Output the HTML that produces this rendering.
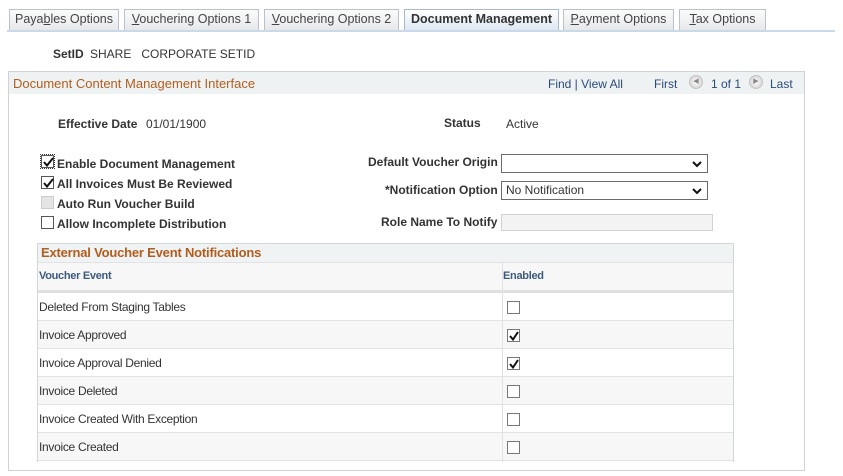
<!DOCTYPE html>
<html><head><meta charset="utf-8"><style>
*{margin:0;padding:0;box-sizing:border-box}
body{width:843px;height:476px;background:#fff;font-family:"Liberation Sans",Arial,sans-serif;position:relative;overflow:hidden;color:#333}
.a{position:absolute;white-space:nowrap}
.tab{position:absolute;top:9px;height:21px;border:1px solid #b9c2cb;border-bottom:none;background:linear-gradient(#fbfbfb,#e6e8ea);font-size:12.5px;color:#444;text-align:center;line-height:19px}
.tab.on{background:linear-gradient(#fff,#dde8f3);font-weight:bold;color:#333;border-color:#a9b9c9}
.b{font-weight:bold;font-size:12px;color:#333}
.t{font-size:12px;color:#333}
.cb{position:absolute;width:13px;height:13px;border:1px solid #555;background:#fff}
.cb svg{position:absolute;left:0;top:0}
.row{position:absolute;left:38px;width:695px;height:28px;border-bottom:1px solid #e2e2e2}
.row span{position:absolute;left:1px;top:7px;font-size:12px;color:#333;letter-spacing:-0.3px}
.row .cb{left:469px;top:8px;border-color:#777}
.g{background:#f7f7f7}
.sel{position:absolute;height:19px;border:1px solid #6b6b6b;background:#fff;font-size:12px;line-height:17px;padding-left:4px}
.sel svg{position:absolute;right:5px;top:5px}
</style></head><body>
<div class="a" style="left:7px;top:30px;width:828px;height:2px;background:#c9d9ea"></div>
<div class="tab" style="left:9px;width:110px">Paya<u>b</u>les Options</div>
<div class="tab" style="left:124px;width:135px"><u>V</u>ouchering Options 1</div>
<div class="tab" style="left:264px;width:135px"><u>V</u>ouchering Options 2</div>
<div class="tab on" style="left:404px;width:155px">Document Management</div>
<div class="tab" style="left:563px;width:111px"><u>P</u>ayment Options</div>
<div class="tab" style="left:679px;width:87px"><u>T</u>ax Options</div>

<div class="a b" style="left:53px;top:47px">SetID</div>
<div class="a t" style="left:90px;top:47px">SHARE &nbsp;&nbsp;CORPORATE SETID</div>

<div class="a" style="left:8px;top:71px;width:797px;height:400px;border:1px solid #cfd3d6"></div>
<div class="a" style="left:9px;top:72px;width:795px;height:22px;background:#eff2f3"></div>
<div class="a" style="left:13px;top:76px;font-size:13px;color:#b25d1e">Document Content Management Interface</div>
<div class="a" style="left:548px;top:77px;font-size:12px;color:#2a4a7a">Find | View All</div>
<div class="a" style="left:654px;top:77px;font-size:12px;color:#2a4a7a">First</div>
<div class="a" style="left:689px;top:75px;width:14px;height:14px;border-radius:50%;background:radial-gradient(#fff,#c9c9c9);border:1px solid #c4c4c4;font-size:7px;line-height:12px;text-align:center;color:#888">◀</div>
<div class="a" style="left:711px;top:77px;font-size:12px;color:#2a4a7a">1 of 1</div>
<div class="a" style="left:749px;top:75px;width:14px;height:14px;border-radius:50%;background:radial-gradient(#fff,#c9c9c9);border:1px solid #c4c4c4;font-size:7px;line-height:12px;text-align:center;color:#888">▶</div>
<div class="a" style="left:770px;top:77px;font-size:12px;color:#2a4a7a">Last</div>

<div class="a b" style="left:58px;top:117px">Effective Date</div>
<div class="a t" style="left:146px;top:117px">01/01/1900</div>
<div class="a b" style="left:444px;top:116px">Status</div>
<div class="a t" style="left:506px;top:117px">Active</div>

<div class="cb" style="left:41px;top:155px;outline:1px dotted #333;outline-offset:0"><svg width="13" height="13"><path d="M2 6 L5 9.5 L11 2" stroke="#111" stroke-width="2" fill="none"/></svg></div>
<div class="a b" style="left:57px;top:157px">Enable Document Management</div>
<div class="cb" style="left:41px;top:176px"><svg width="13" height="13"><path d="M2 6 L5 9.5 L11 2" stroke="#111" stroke-width="2" fill="none"/></svg></div>
<div class="a b" style="left:57px;top:177px">All Invoices Must Be Reviewed</div>
<div class="cb" style="left:41px;top:196px;background:#e4e4e4;border-color:#ccc"></div>
<div class="a b" style="left:57px;top:197px">Auto Run Voucher Build</div>
<div class="cb" style="left:41px;top:216px"></div>
<div class="a b" style="left:57px;top:217px">Allow Incomplete Distribution</div>

<div class="a b" style="left:368px;top:155px">Default Voucher Origin</div>
<div class="sel" style="left:501px;top:154px;width:207px"><svg width="10" height="8"><path d="M1 2 L5 6 L9 2" stroke="#111" stroke-width="2" fill="none"/></svg></div>
<div class="a b" style="left:385px;top:183px">*Notification Option</div>
<div class="sel" style="left:501px;top:181px;width:207px">No Notification<svg width="10" height="8"><path d="M1 2 L5 6 L9 2" stroke="#111" stroke-width="2" fill="none"/></svg></div>
<div class="a b" style="left:381px;top:215px">Role Name To Notify</div>
<div class="a" style="left:501px;top:214px;width:212px;height:17px;border:1px solid #d2d2d2;background:#f3f3f3"></div>

<div class="a" style="left:37px;top:243px;width:697px;height:219px;border:1px solid #d3d6d9;border-bottom:none"></div>
<div class="a" style="left:38px;top:244px;width:695px;height:18px;background:#f0f3f4"></div>
<div class="a" style="left:41px;top:245px;font-size:13px;font-weight:bold;color:#b25d1e;letter-spacing:-0.2px">External Voucher Event Notifications</div>
<div class="a" style="left:38px;top:262px;width:695px;height:31px;background:#f7f7f7;border-top:1px solid #e3e3e3;border-bottom:3px solid #e0e0e0"></div>
<div class="a" style="left:39px;top:270px;font-size:11px;font-weight:bold;color:#3d5a7c;letter-spacing:-0.3px">Voucher Event</div>
<div class="a" style="left:503px;top:270px;font-size:11px;font-weight:bold;color:#3d5a7c;letter-spacing:-0.3px">Enabled</div>

<div class="row" style="top:293px"><span>Deleted From Staging Tables</span><div class="cb"></div></div>
<div class="row g" style="top:321px"><span>Invoice Approved</span><div class="cb"><svg width="13" height="13"><path d="M2 6 L5 9.5 L10 2" stroke="#111" stroke-width="2" fill="none"/></svg></div></div>
<div class="row" style="top:349px"><span>Invoice Approval Denied</span><div class="cb"><svg width="13" height="13"><path d="M2 6 L5 9.5 L10 2" stroke="#111" stroke-width="2" fill="none"/></svg></div></div>
<div class="row g" style="top:377px"><span>Invoice Deleted</span><div class="cb"></div></div>
<div class="row" style="top:405px"><span>Invoice Created With Exception</span><div class="cb"></div></div>
<div class="row g" style="top:433px"><span>Invoice Created</span><div class="cb"></div></div>
<div class="a" style="left:502px;top:262px;width:1px;height:200px;background:#e2e2e2"></div>
</body></html>
